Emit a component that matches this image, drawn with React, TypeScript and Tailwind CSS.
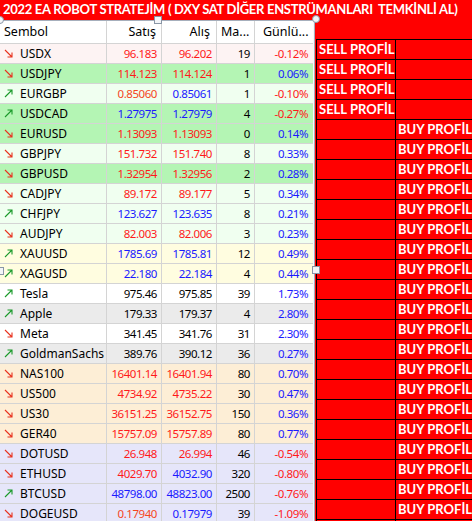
import React from 'react'

type Row = {
  sym: string
  up: boolean
  bid: string
  ask: string
  spread: string
  chg: string
  bidC: string
  askC: string
  chgC: string
  bg: string
}

const R = 'text-[#ff1a1a]'
const O = 'text-[#f5461e]'
const B = 'text-[#1a1aff]'
const K = 'text-black'

const GREEN = 'bg-[#b4f5b4]'
const HONEY = 'bg-[#f0fff0]'
const YELLOW = 'bg-[#fffde0]'
const WHITE = 'bg-white'
const GRAY = 'bg-[#ebebeb]'
const ORANGE = 'bg-[#fdeed6]'
const LAV = 'bg-[#e6e6fa]'

const rows: Row[] = [
  { sym: 'USDX', up: false, bid: '96.183', ask: '96.202', spread: '19', chg: '-0.12%', bidC: R, askC: R, chgC: R, bg: 'bg-[#fdf3f3]' },
  { sym: 'USDJPY', up: false, bid: '114.123', ask: '114.124', spread: '1', chg: '0.06%', bidC: R, askC: R, chgC: B, bg: GREEN },
  { sym: 'EURGBP', up: true, bid: '0.85060', ask: '0.85061', spread: '1', chg: '-0.10%', bidC: O, askC: B, chgC: R, bg: HONEY },
  { sym: 'USDCAD', up: true, bid: '1.27975', ask: '1.27979', spread: '4', chg: '-0.27%', bidC: B, askC: B, chgC: R, bg: GREEN },
  { sym: 'EURUSD', up: false, bid: '1.13093', ask: '1.13093', spread: '0', chg: '0.14%', bidC: R, askC: R, chgC: B, bg: GREEN },
  { sym: 'GBPJPY', up: false, bid: '151.732', ask: '151.740', spread: '8', chg: '0.33%', bidC: R, askC: R, chgC: B, bg: HONEY },
  { sym: 'GBPUSD', up: false, bid: '1.32954', ask: '1.32956', spread: '2', chg: '0.28%', bidC: R, askC: R, chgC: B, bg: GREEN },
  { sym: 'CADJPY', up: false, bid: '89.172', ask: '89.177', spread: '5', chg: '0.34%', bidC: R, askC: R, chgC: B, bg: HONEY },
  { sym: 'CHFJPY', up: true, bid: '123.627', ask: '123.635', spread: '8', chg: '0.21%', bidC: B, askC: B, chgC: B, bg: HONEY },
  { sym: 'AUDJPY', up: false, bid: '82.003', ask: '82.006', spread: '3', chg: '0.23%', bidC: R, askC: R, chgC: B, bg: HONEY },
  { sym: 'XAUUSD', up: true, bid: '1785.69', ask: '1785.81', spread: '12', chg: '0.49%', bidC: B, askC: B, chgC: B, bg: YELLOW },
  { sym: 'XAGUSD', up: true, bid: '22.180', ask: '22.184', spread: '4', chg: '0.44%', bidC: B, askC: B, chgC: B, bg: YELLOW },
  { sym: 'Tesla', up: true, bid: '975.46', ask: '975.85', spread: '39', chg: '1.73%', bidC: K, askC: K, chgC: B, bg: WHITE },
  { sym: 'Apple', up: true, bid: '179.33', ask: '179.37', spread: '4', chg: '2.80%', bidC: K, askC: K, chgC: B, bg: GRAY },
  { sym: 'Meta', up: false, bid: '341.45', ask: '341.76', spread: '31', chg: '2.30%', bidC: K, askC: K, chgC: B, bg: WHITE },
  { sym: 'GoldmanSachs', up: true, bid: '389.76', ask: '390.12', spread: '36', chg: '0.27%', bidC: K, askC: K, chgC: B, bg: GRAY },
  { sym: 'NAS100', up: false, bid: '16401.14', ask: '16401.94', spread: '80', chg: '0.70%', bidC: R, askC: R, chgC: B, bg: ORANGE },
  { sym: 'US500', up: false, bid: '4734.92', ask: '4735.22', spread: '30', chg: '0.47%', bidC: R, askC: R, chgC: B, bg: ORANGE },
  { sym: 'US30', up: false, bid: '36151.25', ask: '36152.75', spread: '150', chg: '0.36%', bidC: R, askC: R, chgC: B, bg: ORANGE },
  { sym: 'GER40', up: false, bid: '15757.09', ask: '15757.89', spread: '80', chg: '0.77%', bidC: R, askC: R, chgC: B, bg: ORANGE },
  { sym: 'DOTUSD', up: false, bid: '26.948', ask: '26.994', spread: '46', chg: '-0.54%', bidC: R, askC: R, chgC: R, bg: LAV },
  { sym: 'ETHUSD', up: false, bid: '4029.70', ask: '4032.90', spread: '320', chg: '-0.80%', bidC: R, askC: B, chgC: R, bg: LAV },
  { sym: 'BTCUSD', up: true, bid: '48798.00', ask: '48823.00', spread: '2500', chg: '-0.76%', bidC: B, askC: B, chgC: R, bg: LAV },
  { sym: 'DOGEUSD', up: false, bid: '0.17940', ask: '0.17979', spread: '39', chg: '-1.09%', bidC: O, askC: B, chgC: R, bg: LAV },
]

function Arrow({ up }: { up: boolean }) {
  return up ? (
    <svg width="9" height="9" viewBox="0 0 9 9" className="shrink-0">
      <path d="M1 8 L8 1 M3.5 1 H8 V5.5" stroke="#1a9a2a" strokeWidth="1.1" fill="none" />
    </svg>
  ) : (
    <svg width="9" height="9" viewBox="0 0 9 9" className="shrink-0">
      <path d="M1 1 L8 8 M8 3.5 V8 H3.5" stroke="#e8321e" strokeWidth="1.1" fill="none" />
    </svg>
  )
}

const cell = 'h-full flex items-center border-r border-[#d4d4d4]'
const num = 'text-[11.5px] tracking-[-0.45px] whitespace-nowrap'

function Handle({ className, round }: { className: string; round?: boolean }) {
  return (
    <div
      className={`absolute w-[8px] h-[8px] bg-[#f3f5f8] border border-[#8a96a6] ${round ? 'rounded-full' : ''} ${className}`}
    />
  )
}

export default function App() {
  return (
    <div className="relative w-[472px] h-[521px] overflow-hidden bg-[#ff0000]">
      <div className="h-[20px] pl-[3px] flex items-center whitespace-pre text-white font-bold text-[13px] tracking-[-0.3px] font-['Lato',sans-serif]">
        2022 EA ROBOT STRATEJİM ( DXY SAT DİĞER ENSTRÜMANLARI  TEMKİNLİ AL)
      </div>

      <div className="flex items-start">
        <div className="w-[317px] h-[501px] bg-white border-t border-r border-[#a6afbc] flex font-['Noto_Sans',sans-serif] text-[12px] leading-none">
          <div className="w-[313px] shrink-0">
            <div className="h-[23px] flex border-b border-[#d4d4d4] text-black text-[12.5px]">
              <div className={`${cell} w-[107px] pl-[4px]`}>Sembol</div>
              <div className={`${cell} w-[55px] justify-end pr-[5px]`}>Satış</div>
              <div className={`${cell} w-[55px] justify-end pr-[6px]`}>Alış</div>
              <div className={`${cell} w-[38px] pl-[4px]`}>Ma...</div>
              <div className="h-full flex items-center w-[58px] pl-[8px]">Günlü...</div>
            </div>
            {rows.map((r) => (
              <div key={r.sym} className={`h-[20px] flex border-b border-[#d4d4d4] ${r.bg}`}>
                <div className={`${cell} w-[107px] pl-[4px] gap-[7px] text-black`}>
                  <Arrow up={r.up} />
                  <span>{r.sym}</span>
                </div>
                <div className={`${cell} ${num} w-[55px] justify-end pr-[4px] ${r.bidC}`}>{r.bid}</div>
                <div className={`${cell} ${num} w-[55px] justify-end pr-[4px] ${r.askC}`}>{r.ask}</div>
                <div className={`${cell} ${num} w-[38px] justify-end pr-[4px] text-black`}>{r.spread}</div>
                <div className={`h-full flex items-center ${num} w-[58px] justify-end pr-[5px] ${r.chgC}`}>{r.chg}</div>
              </div>
            ))}
          </div>
          <div className="flex-1 bg-[#ececec] border-l border-[#f8f8f8]" />
        </div>

        <div className="flex-1 ml-[1px] pt-[19px] text-white font-bold text-[13px] font-['Lato',sans-serif] leading-none whitespace-nowrap">
          {Array.from({ length: 25 }).map((_, i) => (
            <div key={i} className="h-[20px] flex border-t border-black">
              <div className="w-[79px] shrink-0 h-full border-l border-black flex items-center pl-[2px]">
                {i < 4 ? 'SELL PROFİL' : ''}
              </div>
              <div className="flex-1 h-full border-l border-black flex items-center pl-[2px]">
                {i >= 4 && i < 24 ? 'BUY PROFİL' : ''}
              </div>
            </div>
          ))}
        </div>
      </div>

      <Handle round className="left-[-4px] top-[16px]" />
      <Handle className="left-[154px] top-[16px]" />
      <Handle round className="left-[312px] top-[15px]" />
      <Handle className="left-[-4px] top-[267px]" />
      <Handle className="left-[312px] top-[266px]" />
    </div>
  )
}
